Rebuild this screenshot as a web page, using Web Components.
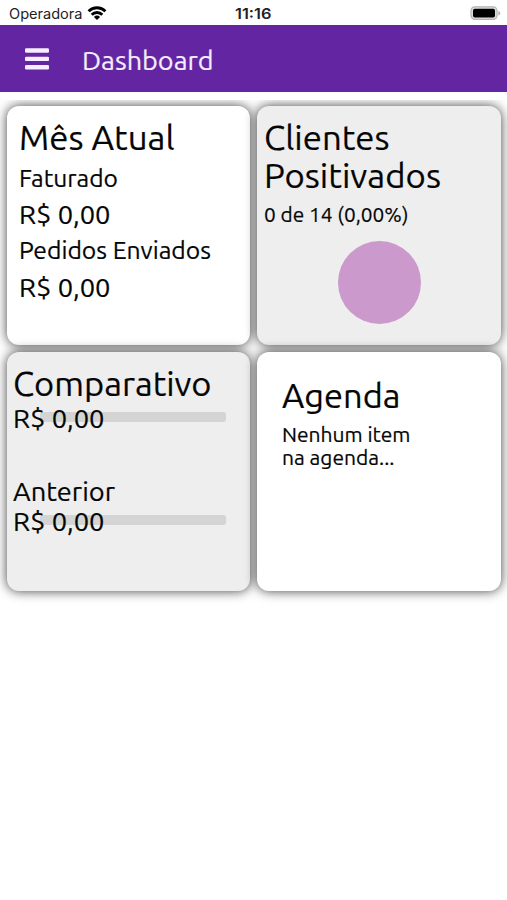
<!DOCTYPE html>
<html lang="pt-BR">
<head>
<meta charset="utf-8">
<meta name="viewport" content="width=device-width, initial-scale=1">
<title>Dashboard</title>
<style>
  body {
    margin: 0;
    background: #fff;
    color: #050505;
    font-family: Ubuntu, "Noto Sans", sans-serif;
  }
</style>
</head>
<body>
<dashboard-app></dashboard-app>

<script>
class TextLine extends HTMLElement {
  constructor() {
    super();
    this.shadowDOM = this.attachShadow({ mode: 'open' });
  }

  connectedCallback() {
    this.shadowDOM.innerHTML = `
      <style>
        :host {
          display: block;
          position: relative;
          z-index: 1;
          white-space: nowrap;
          font-size: ${this.getAttribute('size')}px;
          line-height: ${this.getAttribute('line')}px;
        }
        span {
          display: inline-block;
          vertical-align: top;
          transform-origin: 0 0;
        }
      </style>
      <span><slot></slot></span>
    `;
    // squeeze or stretch the line to its set width
    const span = this.shadowDOM.querySelector('span');
    const width = Number(this.getAttribute('width'));
    const natural = span.getBoundingClientRect().width;
    if (width && natural) {
      span.style.transform = `scaleX(${width / natural})`;
      this.style.width = `${width}px`;
    }
  }
}

class StatusBar extends HTMLElement {
  constructor() {
    super();
    this.shadowDOM = this.attachShadow({ mode: 'open' });
  }

  connectedCallback() {
    this.shadowDOM.innerHTML = `
      <style>
        :host {
          display: grid;
          grid-template-columns: 1fr auto 1fr;
          align-items: center;
          box-sizing: border-box;
          height: 25px;
          padding: 2px 6px 0 9px;
          font-family: Inter, sans-serif;
          color: #222;
        }
        .carrier {
          display: flex;
          align-items: center;
          gap: 4.5px;
        }
        .time {
          margin-right: 3px;
          font-weight: 600;
        }
        .battery {
          justify-self: end;
        }
        svg {
          display: block;
        }
      </style>
      <div class="carrier">
        <text-line size="14" line="22" width="73.5">Operadora</text-line>
        <svg width="20" height="15" viewBox="0 0 20 15">
          <g fill="none" stroke="#000" stroke-width="2.9">
            <path d="M1.6 5.2 A12.1 12.1 0 0 1 18.4 5.2"/>
            <path d="M4.7 8.7 A7.6 7.6 0 0 1 15.3 8.7"/>
          </g>
          <path d="M6.9 10.9 A4.6 4.6 0 0 1 13.1 10.9 L10 14.1 Z"/>
        </svg>
      </div>
      <text-line class="time" size="14.5" line="22" width="36.5">11:16</text-line>
      <svg class="battery" width="31" height="15" viewBox="0 0 31 15">
        <rect x="1" y="0.8" width="26" height="12.6" rx="3.8" fill="#ddd" stroke="#b4b4b4" stroke-width="1.2"/>
        <rect x="3" y="2.8" width="22" height="8.8" rx="1.8"/>
        <path d="M28.3 4.8 Q30.3 5.4 30.3 7.2 Q30.3 8.9 28.3 9.5 Z" fill="#b4b4b4"/>
      </svg>
    `;
  }
}

class AppHeader extends HTMLElement {
  constructor() {
    super();
    this.shadowDOM = this.attachShadow({ mode: 'open' });
  }

  connectedCallback() {
    this.shadowDOM.innerHTML = `
      <style>
        :host {
          display: flex;
          align-items: center;
          gap: 32.5px;
          box-sizing: border-box;
          height: 67px;
          padding-left: 25px;
          background: #6325a1;
          color: #f6edff;
          -webkit-text-stroke: 0.2px;
        }
        svg {
          display: block;
        }
        text-line {
          margin-top: 2px;
        }
      </style>
      <svg width="24" height="22" viewBox="0 0 24 22" fill="#f6edff">
        <rect width="24" height="4.4" y="0.3" rx="1.2"/>
        <rect width="24" height="4.4" y="8.7" rx="1.2"/>
        <rect width="24" height="4.4" y="17.1" rx="1.2"/>
      </svg>
      <text-line size="27" line="34" width="131.5"><slot></slot></text-line>
    `;
  }
}

class DashCard extends HTMLElement {
  constructor() {
    super();
    this.shadowDOM = this.attachShadow({ mode: 'open' });
  }

  connectedCallback() {
    this.shadowDOM.innerHTML = `
      <style>
        :host {
          display: block;
          box-sizing: border-box;
          padding: 13px 6px 0 6.4px;
          border-radius: 12px;
          background: #fff;
          box-shadow: 0 0 12px rgba(0, 0, 0, 0.75);
          -webkit-text-stroke: 0.2px;
        }
        :host([shaded]) {
          background: #eee;
        }
      </style>
      <slot></slot>
    `;
  }
}

class PieChart extends HTMLElement {
  constructor() {
    super();
    this.shadowDOM = this.attachShadow({ mode: 'open' });
  }

  connectedCallback() {
    this.shadowDOM.innerHTML = `
      <style>
        :host {
          display: block;
          width: 83px;
          height: 83px;
          margin: 8.4px auto 0;
          border-radius: 50%;
          background: #cc99cc;
        }
      </style>
    `;
  }
}

class AmountBar extends HTMLElement {
  constructor() {
    super();
    this.shadowDOM = this.attachShadow({ mode: 'open' });
  }

  connectedCallback() {
    this.shadowDOM.innerHTML = `
      <style>
        :host {
          display: block;
          position: relative;
        }
        /* the track runs behind the amount */
        .track {
          position: absolute;
          top: 8.7px;
          left: 27px;
          width: 185.6px;
          height: 10px;
          border-radius: 3px;
          background: #d4d4d4;
        }
      </style>
      <div class="track"></div>
      <text-line size="27" line="31" width="91.5"><slot></slot></text-line>
    `;
  }
}

class DashboardApp extends HTMLElement {
  constructor() {
    super();
    this.shadowDOM = this.attachShadow({ mode: 'open' });
  }

  connectedCallback() {
    this.shadowDOM.innerHTML = `
      <style>
        :host {
          display: block;
          height: 900px;
          overflow: hidden;
        }
        main {
          display: grid;
          grid-template-columns: 243px 243.6px;
          grid-template-rows: 239px 239px;
          gap: 7px 7.4px;
          margin-top: 8px;
          padding: 6px 6px 30px 7px;
          overflow: hidden;
        }
        .month {
          padding-left: 12px;
        }
        .agenda {
          padding: 25.2px 0 0 24.5px;
        }
        .previous {
          margin-top: 42px;
        }
        .empty {
          margin-top: 8px;
        }
      </style>
      <status-bar></status-bar>
      <app-header>Dashboard</app-header>
      <main>
        <dash-card class="month">
          <text-line size="34.5" line="38" width="155.5">Mês Atual</text-line>
          <text-line size="24.5" line="42" width="99">Faturado</text-line>
          <text-line size="27" line="31" width="91.5">R$ 0,00</text-line>
          <text-line size="24.5" line="41" width="192">Pedidos Enviados</text-line>
          <text-line size="27" line="32" width="91.5">R$ 0,00</text-line>
        </dash-card>
        <dash-card shaded>
          <text-line size="34.5" line="38" width="125.5">Clientes</text-line>
          <text-line size="34.5" line="38" width="177">Positivados</text-line>
          <text-line size="21" line="38" width="144.5">0 de 14 (0,00%)</text-line>
          <pie-chart></pie-chart>
        </dash-card>
        <dash-card shaded>
          <text-line size="34.5" line="38" width="198.5">Comparativo</text-line>
          <amount-bar>R$ 0,00</amount-bar>
          <text-line class="previous" size="26.5" line="30" width="102">Anterior</text-line>
          <amount-bar>R$ 0,00</amount-bar>
        </dash-card>
        <dash-card class="agenda">
          <text-line size="34.5" line="38" width="118.5">Agenda</text-line>
          <text-line class="empty" size="21" line="23" width="128.5">Nenhum item</text-line>
          <text-line size="21" line="23" width="112.5">na agenda...</text-line>
        </dash-card>
      </main>
    `;
  }
}

customElements.define('text-line', TextLine);
customElements.define('status-bar', StatusBar);
customElements.define('app-header', AppHeader);
customElements.define('dash-card', DashCard);
customElements.define('pie-chart', PieChart);
customElements.define('amount-bar', AmountBar);
customElements.define('dashboard-app', DashboardApp);
</script>
</body>
</html>
